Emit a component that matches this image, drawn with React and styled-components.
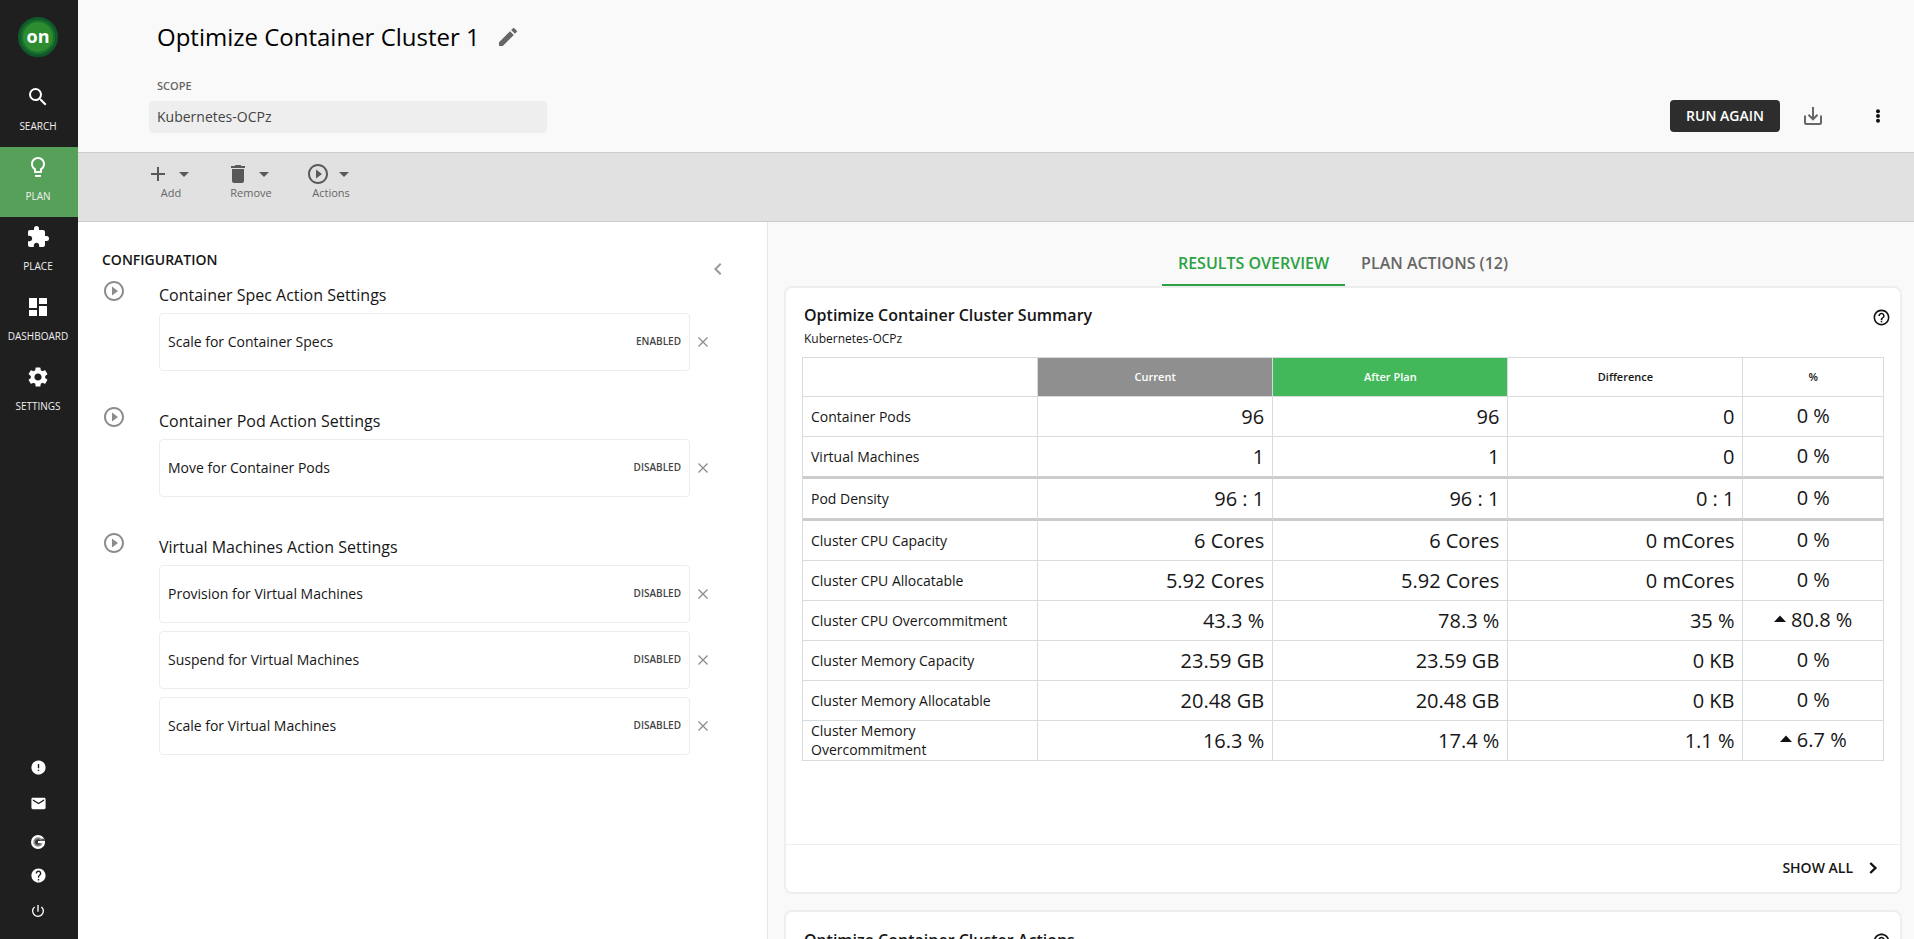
import React from "react";
import styled, { createGlobalStyle } from "styled-components";
import {
  MdSearch, MdLightbulbOutline, MdExtension, MdDashboard, MdSettings,
  MdError, MdEmail, MdHelp, MdPowerSettingsNew, MdEdit, MdAdd, MdDelete,
  MdPlayCircleOutline, MdArrowDropDown, MdChevronLeft, MdHelpOutline,
} from "react-icons/md";

const GlobalStyle = createGlobalStyle`
  *, *::before, *::after { box-sizing: border-box; }
  body {
    margin: 0;
    font-family: "Open Sans", "Noto Sans", sans-serif;
    font-size: 14px;
    color: #161616;
    background: #f9f9f9;
  }
  h1, h2, h3, p { margin: 0; }
  button, input { font: inherit; }
  svg { display: block; }
`;

const Shell = styled.div`
  display: flex;
  height: 100vh;
  overflow: hidden;
`;

/* Sidebar */

const Sidebar = styled.nav`
  flex: none;
  display: flex;
  flex-direction: column;
  width: 78px;
  background: #1f1f1f;
`;

const LogoLink = styled.a`
  display: flex;
  justify-content: center;
  height: 77px;
  padding: 17px 2px 0 0;
  text-decoration: none;
`;

const LogoBadge = styled.span`
  display: flex;
  align-items: center;
  justify-content: center;
  width: 40px;
  height: 40px;
  border: 3px solid #0e5a2a;
  border-radius: 50%;
  background: #2c8c2f;
  box-shadow: inset 0 0 0 2px #1a702c;
  color: #fff;
  font-size: 18px;
  font-weight: 700;
  line-height: 24px;
  padding-bottom: 2px;
`;

const NavItem = styled.a`
  display: flex;
  flex-direction: column;
  align-items: center;
  gap: 9px;
  height: 70px;
  padding: 8px 2px 0 0;
  background: ${(p) => (p.$active ? "#57a05a" : "transparent")};
  color: #fff;
  font-size: 10px;
  line-height: 16px;
  text-decoration: none;

  span { color: #f0f0f0; }
`;

const NavFooter = styled.div`
  display: flex;
  flex-direction: column;
  align-items: center;
  gap: 4px;
  margin-top: auto;
  padding: 0 2px 12px 0;
`;

const FooterLink = styled.a`
  display: flex;
  align-items: center;
  justify-content: center;
  width: 32px;
  height: 32px;
  color: #fff;
`;

/* Header */

const Main = styled.main`
  flex: 1;
  min-width: 0;
  display: flex;
  flex-direction: column;
`;

const Header = styled.header`
  display: flex;
  align-items: flex-end;
  justify-content: space-between;
  padding: 19px 24px 19px 71px;
  border-bottom: 1px solid #ccc;
`;

const TitleRow = styled.div`
  display: flex;
  align-items: center;
  gap: 16px;
  padding-left: 8px;
`;

const PageTitle = styled.h1`
  color: #000;
  font-size: 24px;
  font-weight: 400;
  line-height: 36px;
`;

const IconButton = styled.button`
  display: flex;
  align-items: center;
  justify-content: center;
  width: ${(p) => p.$size || 24}px;
  height: ${(p) => p.$size || 24}px;
  padding: 0;
  border: 0;
  background: none;
  color: ${(p) => p.$color || "#666"};
`;

const ScopeLabel = styled.label`
  display: block;
  margin-top: 23px;
  padding-left: 8px;
  color: #666;
  font-size: 11px;
  font-weight: 600;
  line-height: 16px;
`;

const ScopeInput = styled.input`
  display: block;
  width: 398px;
  height: 32px;
  margin-top: 7px;
  padding: 0 8px 2px;
  border: 0;
  border-radius: 4px;
  background: #eee;
  color: #444;
  font-size: 14px;
`;

const HeaderActions = styled.div`
  display: flex;
  align-items: center;
  padding-bottom: 1px;
`;

const RunButton = styled.button`
  width: 110px;
  height: 32px;
  margin-right: 21px;
  padding: 0 0 2px;
  border: 0;
  border-radius: 4px;
  background: #2d2d2d;
  color: #fff;
  font-size: 14px;
  font-weight: 600;
`;

const MenuSpacer = styled.div`
  margin-left: 41px;
`;

const Toolbar = styled.div`
  display: flex;
  height: 69px;
  padding: 9px 0 0 53px;
  border-bottom: 1px solid #ccc;
  background: #e1e1e1;
`;

const ToolButton = styled.button`
  display: flex;
  flex-direction: column;
  align-items: center;
  width: 80px;
  padding: 0;
  border: 0;
  background: none;
  color: #666;
  font-size: 11px;
  line-height: 14px;
`;

const ToolIcons = styled.span`
  display: flex;
  gap: 2px;
  color: #595959;
`;

/* Configuration panel */

const Body = styled.div`
  flex: 1;
  min-height: 0;
  display: flex;
`;

const ConfigPanel = styled.section`
  flex: 0 0 690px;
  padding: 28px 31px 0 24px;
  border-right: 1px solid #e6e6e6;
  background: #fff;
`;

const ConfigHeader = styled.div`
  display: flex;
  justify-content: space-between;
  height: 29px;

  h2 {
    font-size: 14px;
    font-weight: 600;
    line-height: 20px;
  }
`;

const CollapseBox = styled.div`
  padding: 7px 6px 0 0;
`;

const SettingGroup = styled.section`
  display: grid;
  grid-template-columns: 24px minmax(0, 1fr);
  column-gap: 33px;
  margin-bottom: 34px;
  padding-right: 24px;
  color: #8c8c8c;
`;

const GroupTitle = styled.h3`
  padding-top: 4px;
  margin-bottom: 6px;
  color: #161616;
  font-size: 16px;
  font-weight: 400;
  line-height: 24px;
`;

const SettingList = styled.div`
  display: flex;
  flex-direction: column;
  gap: 8px;
`;

const SettingRow = styled.div`
  display: flex;
  align-items: center;
  gap: 4px;
`;

const SettingCard = styled.div`
  flex: 1;
  display: flex;
  align-items: center;
  justify-content: space-between;
  height: 58px;
  padding: 0 8px 2px;
  border: 1px solid #ededed;
  border-radius: 4px;
  color: #161616;
`;

const SettingState = styled.span`
  color: #444;
  font-size: 10px;
  font-weight: 600;
`;

/* Results */

const Results = styled.section`
  flex: 1;
  min-width: 0;
  padding: 16px 12px 0 16px;
  overflow: hidden;
`;

const Tabs = styled.div`
  display: flex;
  justify-content: center;
`;

const Tab = styled.button`
  height: 48px;
  padding: 4px 16px 0;
  border: 0;
  border-bottom: 2px solid ${(p) => (p.$active ? "#2aa143" : "transparent")};
  background: none;
  color: ${(p) => (p.$active ? "#2aa143" : "#666")};
  font-size: 16px;
  font-weight: 600;
`;

const Card = styled.article`
  display: flex;
  flex-direction: column;
  min-height: 608px;
  margin-bottom: 16px;
  border: 2px solid #eee;
  border-radius: 8px;
  background: #fff;
`;

const CardHeader = styled.header`
  display: flex;
  align-items: center;
  justify-content: space-between;
  padding: 15px 7px 6px 18px;

  h2 {
    font-size: 16px;
    font-weight: 600;
    line-height: 24px;
  }
  p {
    font-size: 12px;
    line-height: 24px;
  }
`;

const HelpBox = styled.div`
  align-self: flex-start;
  padding-top: 2px;
`;

const SummaryTable = styled.table`
  width: calc(100% - 32px);
  margin: 0 16px;
  table-layout: fixed;
  border-collapse: separate;
  border-spacing: 0;
  border-top: 1px solid #d6dbde;
  border-left: 1px solid #d6dbde;
`;

const PercentCol = styled.col`
  width: 13%;
`;

const HeadCell = styled.th`
  height: 39px;
  padding: 0 0 2px;
  border-right: 1px solid #d6dbde;
  border-bottom: 1px solid #d6dbde;
  background: ${(p) => p.$bg || "#fff"};
  color: ${(p) => (p.$bg ? "#fff" : "#161616")};
  font-size: 11px;
  font-weight: 600;
`;

const Row = styled.tr`
  th, td {
    height: ${(p) => (p.$thick ? 42 : 40)}px;
    padding: 0 8px;
    border-right: 1px solid #d6dbde;
    border-bottom: ${(p) => (p.$thick ? "3px solid #ccc" : "1px solid #d6dbde")};
  }

  th { padding-bottom: 1px; }
`;

const RowLabel = styled.th`
  font-size: 14px;
  font-weight: 400;
  line-height: 19px;
  text-align: left;
`;

const Value = styled.td`
  font-size: 20px;
  line-height: 28px;
  text-align: right;
`;

const Percent = styled.div`
  display: flex;
  align-items: center;
  justify-content: center;
  gap: 5px;
  font-size: 20px;
  line-height: 28px;
  padding-bottom: 2px;
`;

const CardFooter = styled.footer`
  display: flex;
  align-items: center;
  justify-content: flex-end;
  height: 48px;
  margin-top: auto;
  padding: 0 15px 2px 0;
  border-top: 1px solid #eee;
`;

const ShowAll = styled.button`
  display: flex;
  align-items: center;
  gap: 8px;
  padding: 0;
  border: 0;
  background: none;
  color: #161616;
  font-size: 14px;
  font-weight: 600;
`;

/* Icons */

const DownloadIcon = () => (
  <svg width="18" height="18" viewBox="0 0 18 18" fill="none" stroke="#666" strokeWidth="2">
    <path d="M1 8.5V15.5Q1 17 2.500 17H15.500Q17 17 17 15.500V8.500" />
    <path d="M9 0V12M4.500 7.800L9 12.300L13.500 7.800" />
  </svg>
);

const DotsIcon = () => (
  <svg width="4" height="14" viewBox="0 0 4 14" fill="#111">
    <circle cx="2" cy="2.200" r="2" />
    <circle cx="2" cy="7" r="2" />
    <circle cx="2" cy="11.800" r="2" />
  </svg>
);

const CloseIcon = () => (
  <svg width="10" height="10" viewBox="0 0 10 10" stroke="#8c8c8c" strokeWidth="1.300">
    <path d="M.5.5l9 9M9.500.5l-9 9" />
  </svg>
);

const UpIcon = () => (
  <svg width="12" height="12" viewBox="0 0 12 12" fill="#111">
    <path d="M0 8L6 1.500L12 8Z" />
  </svg>
);

const ChevronIcon = () => (
  <svg width="24" height="24" viewBox="0 0 24 24" fill="none" stroke="#111" strokeWidth="2.400">
    <path d="M9.300 7L14.400 12L9.300 17" />
  </svg>
);

const BrandIcon = () => (
  <svg width="14" height="20" viewBox="0 -6 14 20">
    <circle cx="7" cy="7" r="7" fill="#fff" />
    <circle cx="7" cy="7" r="4.700" fill="#888" />
    <circle cx="7" cy="7" r="2.800" fill="#333" />
    <path d="M7 6H14V8.200H7Z" fill="#fff" />
    <path d="M10.500 3.500L14 4V6H10.200Z" fill="#555" />
  </svg>
);

const NAV = [
  ["SEARCH", MdSearch],
  ["PLAN", MdLightbulbOutline],
  ["PLACE", MdExtension],
  ["DASHBOARD", MdDashboard],
  ["SETTINGS", MdSettings],
];

const TOOLS = [
  ["Add", MdAdd],
  ["Remove", MdDelete],
  ["Actions", MdPlayCircleOutline],
];

const GROUPS = [
  ["Container Spec Action Settings", [["Scale for Container Specs", "ENABLED"]]],
  ["Container Pod Action Settings", [["Move for Container Pods", "DISABLED"]]],
  ["Virtual Machines Action Settings", [
    ["Provision for Virtual Machines", "DISABLED"],
    ["Suspend for Virtual Machines", "DISABLED"],
    ["Scale for Virtual Machines", "DISABLED"],
  ]],
];

const ROWS = [
  { label: "Container Pods", values: ["96", "96", "0"], pct: "0 %" },
  { label: "Virtual Machines", values: ["1", "1", "0"], pct: "0 %", thick: true },
  { label: "Pod Density", values: ["96 : 1", "96 : 1", "0 : 1"], pct: "0 %", thick: true },
  { label: "Cluster CPU Capacity", values: ["6 Cores", "6 Cores", "0 mCores"], pct: "0 %" },
  { label: "Cluster CPU Allocatable", values: ["5.92 Cores", "5.92 Cores", "0 mCores"], pct: "0 %" },
  { label: "Cluster CPU Overcommitment", values: ["43.3 %", "78.3 %", "35 %"], pct: "80.8 %", up: true },
  { label: "Cluster Memory Capacity", values: ["23.59 GB", "23.59 GB", "0 KB"], pct: "0 %" },
  { label: "Cluster Memory Allocatable", values: ["20.48 GB", "20.48 GB", "0 KB"], pct: "0 %" },
  { label: "Cluster Memory Overcommitment", values: ["16.3 %", "17.4 %", "1.1 %"], pct: "6.7 %", up: true },
];

export default function App() {
  return (
    <>
      <GlobalStyle />
      <Shell>
        <Sidebar aria-label="Main">
          <LogoLink href="#home">
            <LogoBadge>on</LogoBadge>
          </LogoLink>
          {NAV.map(([label, Icon]) => (
            <NavItem key={label} href={"#" + label.toLowerCase()} $active={label === "PLAN"}>
              <Icon size={24} />
              <span>{label}</span>
            </NavItem>
          ))}
          <NavFooter>
            <FooterLink href="#alerts" aria-label="Alerts"><MdError size={17} /></FooterLink>
            <FooterLink href="#mail" aria-label="Mail"><MdEmail size={17} /></FooterLink>
            <FooterLink href="#community" aria-label="Community"><BrandIcon /></FooterLink>
            <FooterLink href="#help" aria-label="Help"><MdHelp size={17} /></FooterLink>
            <FooterLink href="#logout" aria-label="Log out"><MdPowerSettingsNew size={16} /></FooterLink>
          </NavFooter>
        </Sidebar>

        <Main>
          <Header>
            <div>
              <TitleRow>
                <PageTitle>Optimize Container Cluster 1</PageTitle>
                <IconButton aria-label="Rename plan"><MdEdit size={24} /></IconButton>
              </TitleRow>
              <ScopeLabel htmlFor="scope">SCOPE</ScopeLabel>
              <ScopeInput id="scope" defaultValue="Kubernetes-OCPz" readOnly />
            </div>
            <HeaderActions>
              <RunButton>RUN AGAIN</RunButton>
              <IconButton aria-label="Download"><DownloadIcon /></IconButton>
              <MenuSpacer>
                <IconButton aria-label="More options"><DotsIcon /></IconButton>
              </MenuSpacer>
            </HeaderActions>
          </Header>

          <Toolbar>
            {TOOLS.map(([label, Icon]) => (
              <ToolButton key={label}>
                <ToolIcons>
                  <Icon size={24} />
                  <MdArrowDropDown size={24} />
                </ToolIcons>
                {label}
              </ToolButton>
            ))}
          </Toolbar>

          <Body>
            <ConfigPanel>
              <ConfigHeader>
                <h2>CONFIGURATION</h2>
                <CollapseBox>
                  <IconButton aria-label="Collapse configuration" $color="#999">
                    <MdChevronLeft size={24} />
                  </IconButton>
                </CollapseBox>
              </ConfigHeader>
              {GROUPS.map(([title, settings]) => (
                <SettingGroup key={title}>
                  <MdPlayCircleOutline size={24} />
                  <div>
                    <GroupTitle>{title}</GroupTitle>
                    <SettingList>
                      {settings.map(([name, state]) => (
                        <SettingRow key={name}>
                          <SettingCard>
                            <span>{name}</span>
                            <SettingState>{state}</SettingState>
                          </SettingCard>
                          <IconButton aria-label={"Remove " + name} $size={18}><CloseIcon /></IconButton>
                        </SettingRow>
                      ))}
                    </SettingList>
                  </div>
                </SettingGroup>
              ))}
            </ConfigPanel>

            <Results>
              <Tabs role="tablist">
                <Tab role="tab" aria-selected="true" $active>RESULTS OVERVIEW</Tab>
                <Tab role="tab" aria-selected="false">PLAN ACTIONS (12)</Tab>
              </Tabs>
              <Card>
                <CardHeader>
                  <div>
                    <h2>Optimize Container Cluster Summary</h2>
                    <p>Kubernetes-OCPz</p>
                  </div>
                  <HelpBox>
                    <IconButton aria-label="About this summary" $color="#111"><MdHelpOutline size={19} /></IconButton>
                  </HelpBox>
                </CardHeader>
                <SummaryTable>
                  <colgroup>
                    <col /><col /><col /><col /><PercentCol />
                  </colgroup>
                  <thead>
                    <tr>
                      <HeadCell />
                      <HeadCell scope="col" $bg="#8f8f8f">Current</HeadCell>
                      <HeadCell scope="col" $bg="#42b85a">After Plan</HeadCell>
                      <HeadCell scope="col">Difference</HeadCell>
                      <HeadCell scope="col">%</HeadCell>
                    </tr>
                  </thead>
                  <tbody>
                    {ROWS.map((row) => (
                      <Row key={row.label} $thick={row.thick}>
                        <RowLabel scope="row">{row.label}</RowLabel>
                        {row.values.map((value, i) => <Value key={i}>{value}</Value>)}
                        <td>
                          <Percent>
                            {row.up && <UpIcon />}
                            {row.pct}
                          </Percent>
                        </td>
                      </Row>
                    ))}
                  </tbody>
                </SummaryTable>
                <CardFooter>
                  <ShowAll>SHOW ALL <ChevronIcon /></ShowAll>
                </CardFooter>
              </Card>
              <Card>
                <CardHeader>
                  <h2>Optimize Container Cluster Actions</h2>
                  <HelpBox>
                    <IconButton aria-label="About these actions" $color="#111"><MdHelpOutline size={19} /></IconButton>
                  </HelpBox>
                </CardHeader>
              </Card>
            </Results>
          </Body>
        </Main>
      </Shell>
    </>
  );
}
